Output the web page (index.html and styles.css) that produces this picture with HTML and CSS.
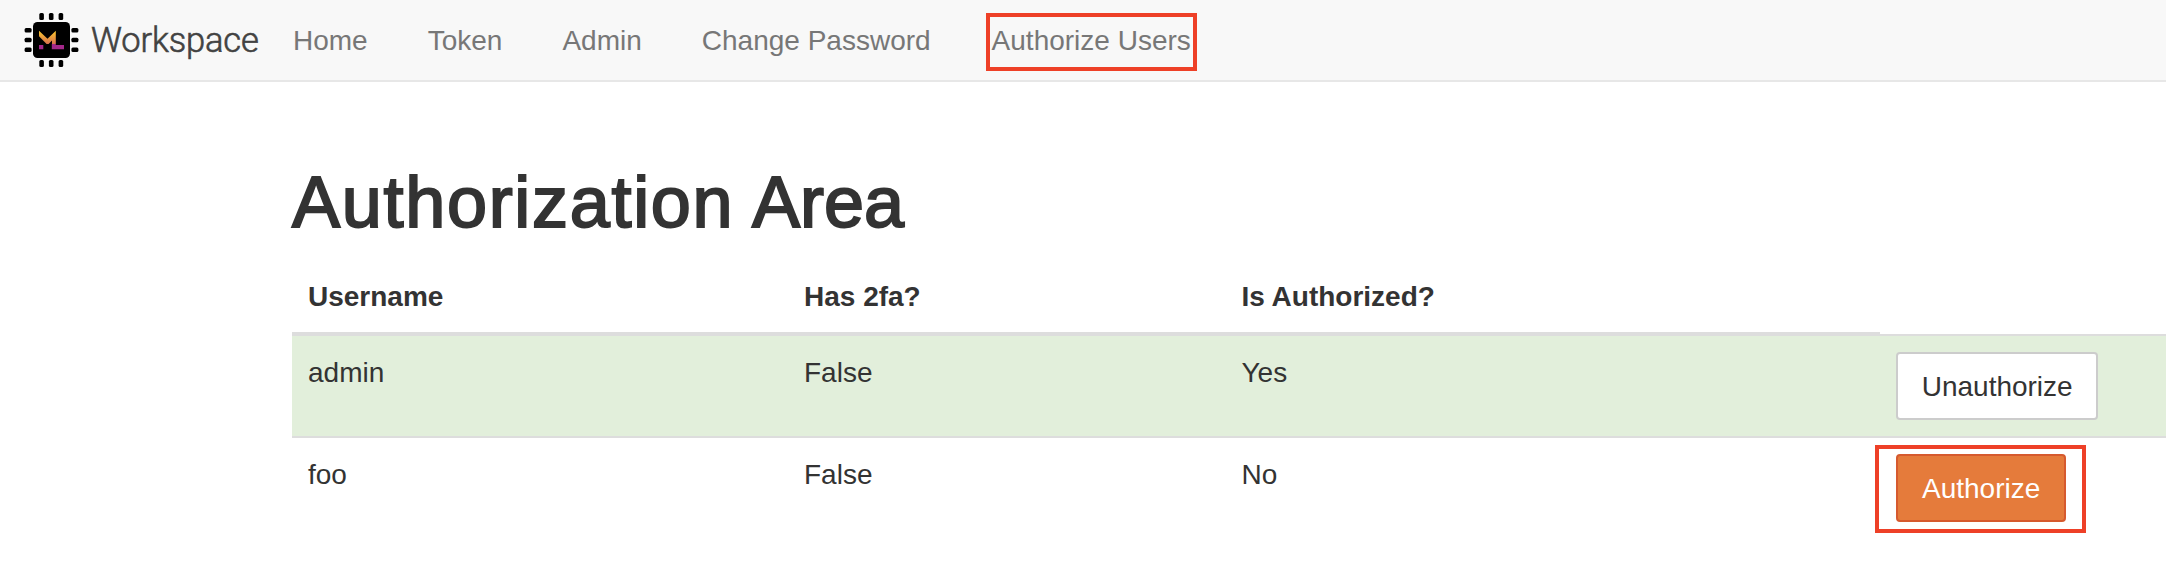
FILE: index.html
```html
<!DOCTYPE html>
<html lang="en">
<head>
<meta charset="utf-8">
<title>Authorization Area</title>
<link rel="stylesheet" href="styles.css">
</head>
<body>
<header class="navbar">
  <a class="brand">
    <svg class="brand-icon" viewBox="24 12 56 56" width="56" height="56" aria-hidden="true">
      <defs>
        <linearGradient id="flame" x1="0" y1="0" x2="0" y2="1">
          <stop offset="0" stop-color="#fbc92c"/>
          <stop offset="1" stop-color="#d8704e"/>
        </linearGradient>
      </defs>
      <rect x="33" y="22" width="37" height="36" rx="4.5"/>
      <g>
        <rect x="39.3" y="13" width="4.6" height="7" rx="1.5"/><rect x="48.9" y="13" width="4.6" height="7" rx="1.5"/><rect x="58.6" y="13" width="4.6" height="7" rx="1.5"/>
        <rect x="39.3" y="60" width="4.6" height="7" rx="1.5"/><rect x="48.9" y="60" width="4.6" height="7" rx="1.5"/><rect x="58.6" y="60" width="4.6" height="7" rx="1.5"/>
        <rect x="24.6" y="28" width="7" height="4.6" rx="1.5"/><rect x="24.6" y="37.7" width="7" height="4.6" rx="1.5"/><rect x="24.6" y="47.4" width="7" height="4.6" rx="1.5"/>
        <rect x="71.4" y="28" width="7" height="4.6" rx="1.5"/><rect x="71.4" y="37.7" width="7" height="4.6" rx="1.5"/><rect x="71.4" y="47.4" width="7" height="4.6" rx="1.5"/>
      </g>
      <path fill="url(#flame)" d="M39 30.7L47.5 38.7L55.8 30.7V44H52V40.4L48.6 44H46.6L39 36.2Z"/>
      <path fill="#a3288a" d="M39 45H43.3V49.2H39ZM51.8 44H55.8V45H64V49.2H51.8Z"/>
    </svg>
    <span class="brand-name">Workspace</span>
  </a>
  <nav class="nav">
    <a class="nav-link">Home</a>
    <a class="nav-link">Token</a>
    <a class="nav-link">Admin</a>
    <a class="nav-link">Change Password</a>
    <a class="nav-link marked">Authorize Users</a>
  </nav>
</header>
<main class="content">
  <h1 class="title">Authorization <span class="title-end">Area</span></h1>
  <div class="table">
    <div class="row head">
      <div class="cell">Username</div><div class="cell">Has 2fa?</div><div class="cell">Is Authorized?</div><div class="cell blank"></div>
    </div>
    <div class="row success">
      <div class="cell">admin</div><div class="cell">False</div><div class="cell">Yes</div>
      <div class="cell"><button class="btn">Unauthorize</button></div>
    </div>
    <div class="row">
      <div class="cell">foo</div><div class="cell">False</div><div class="cell">No</div>
      <div class="cell"><button class="btn btn-warning marked">Authorize</button></div>
    </div>
  </div>
</main>
</body>
</html>
```
FILE: styles.css
```css
*, *::after { box-sizing: border-box; }
body {
  margin: 0;
  background: #fff;
  color: #333;
  font: 28px/40px "Liberation Sans", Arial, sans-serif;
  overflow: hidden;
}
.navbar {
  display: flex;
  height: 82px;
  background: #f8f8f8;
  border-bottom: 2px solid #e7e7e7;
}
.brand {
  display: flex;
  align-items: center;
  width: 263px;
  padding-left: 24px;
}
.brand-icon { flex: none; }
.brand-name {
  margin-left: 11px;
  font-family: Roboto, sans-serif;
  font-weight: 300;
  font-size: 34.5px;
  letter-spacing: -0.15px;
  color: #424242;
  -webkit-text-stroke: 0.6px #424242;
}
.nav { display: flex; align-items: center; }
.nav-link { position: relative; padding: 1px 30px 0; color: #777; white-space: nowrap; }
.nav-link.marked { padding-left: 31px; }
.marked { position: relative; }
.marked::after {
  content: "";
  position: absolute;
  border: 4px solid #ee4027;
  pointer-events: none;
}
.nav-link.marked::after { left: 25px; top: -7px; width: 211px; height: 58px; }
.btn.marked::after { left: -23px; top: -11px; width: 211px; height: 88px; }
.content { padding: 80px 0 0 292px; }
.title {
  margin: 0 0 18px;
  font-size: 72px;
  line-height: 80px;
  font-weight: 400;
  letter-spacing: 1.7px;
  -webkit-text-stroke: 2px #333;
}
.title-end { margin-left: -4px; letter-spacing: 0; }
.row {
  display: grid;
  grid-template-columns: 496px 437.5px 654.5px 1fr;
  border-bottom: 2px solid #ddd;
}
.row:last-child { border-bottom: 0; }
.cell { height: 100px; padding: 17px 16px 15px; }
.head { font-weight: 700; border-bottom: 0; }
.head .cell { height: 76px; border-bottom: 4px solid #ddd; }
.head .blank { border-bottom-width: 2px; }
.success { background: #e2efdb; }
.btn {
  display: block;
  height: 68px;
  margin-top: -1px;
  padding: 1px 23.7px 0;
  border: 2px solid #ccc;
  border-radius: 4px;
  background: #fff;
  color: #333;
  font: inherit;
}
.btn-warning { padding: 1px 24px 0; background: #e57b3b; border-color: #d65a2e; color: #fff; }
```
